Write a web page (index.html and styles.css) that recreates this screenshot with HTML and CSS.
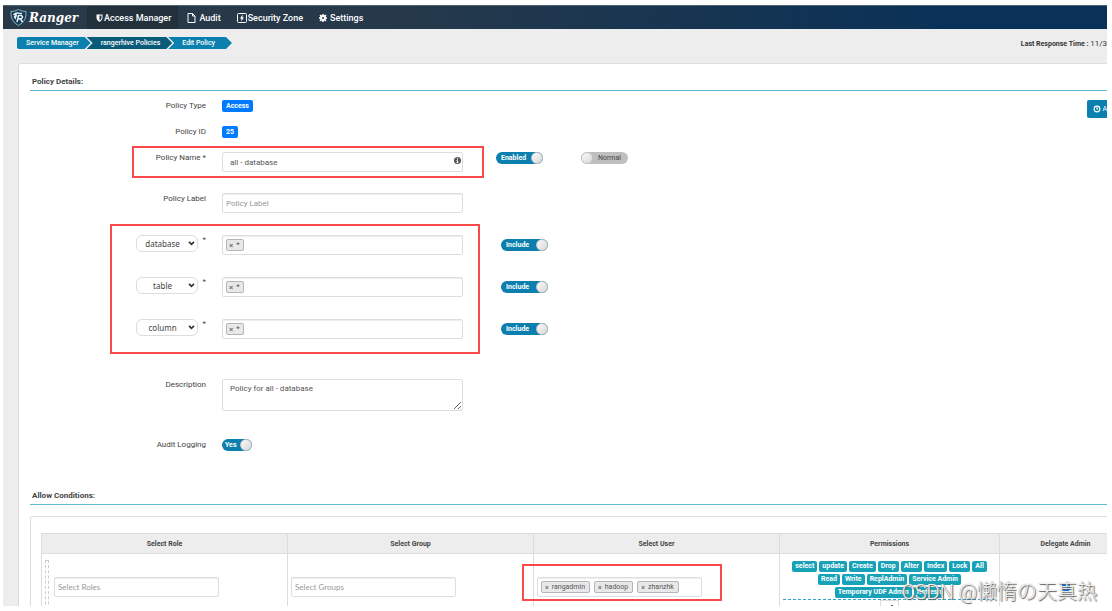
FILE: index.html
```html
<!DOCTYPE html>
<html lang="en">
<head>
<meta charset="utf-8">
<title>Ranger - Edit Policy</title>
<link rel="stylesheet" href="styles.css">
</head>
<body>
<div class="app">
  <header class="navbar">
    <a class="brand" href="#">
      <svg class="shield" viewBox="0 0 34 34" aria-hidden="true">
        <path d="M17 1 Q24 5 32 5 Q34 24 17 33 Q0 24 2 5 Q10 5 17 1Z" fill="#173d55" stroke="#7fb4cc" stroke-width="2"/>
        <path d="M7 12 Q11 7 17 8 L24 9 M8 16 L14 13 M12 10 L10 20 M14 26 L17 13 L23 13 Q27 16 23 19 L17 20 M21 20 L25 26" fill="none" stroke="#e8f2f7" stroke-width="3"/>
      </svg>
      <span>Ranger</span>
    </a>
    <nav class="menu">
      <a class="menu-item active" href="#">
        <svg class="ico ico-shield" viewBox="0 0 14 16" aria-hidden="true"><path d="M1 1H13V8Q13 13 7 16Q1 13 1 8Z" fill="#fff"/><path d="M7 3H11V8Q11 11 7 13Z" fill="#26323f"/></svg>
        <span>Access Manager</span>
      </a>
      <a class="menu-item" href="#">
        <svg class="ico" viewBox="0 0 18 20" aria-hidden="true"><path d="M2 1H11L16 6V19H2Z M11 1V6H16" fill="none" stroke="#fff" stroke-width="2"/></svg>
        <span>Audit</span>
      </a>
      <a class="menu-item zone" href="#">
        <svg class="ico ico-zone" viewBox="0 0 20 20" aria-hidden="true"><rect x="1" y="1" width="18" height="18" rx="2" fill="none" stroke="#fff" stroke-width="2"/><path d="M11 3L6 11H9L8 17L14 9H11Z" fill="#fff"/></svg>
        <span>Security Zone</span>
      </a>
      <a class="menu-item" href="#">
        <svg class="ico ico-gear" viewBox="0 0 16 16" aria-hidden="true"><circle cx="8" cy="8" r="4" fill="none" stroke="#fff" stroke-width="4"/><path d="M8 0V3M8 13V16M0 8H3M13 8H16M2 2L5 5M11 11L14 14M14 2L11 5M5 11L2 14" stroke="#fff" stroke-width="3"/></svg>
        <span>Settings</span>
      </a>
    </nav>
  </header>

  <div class="subbar">
    <nav class="crumbs">
      <a class="crumb" href="#">Service Manager</a>
      <a class="crumb dark" href="#">rangerhive Policies</a>
      <a class="crumb last" href="#">Edit Policy</a>
    </nav>
    <p class="response"><b>Last Response Time :</b> <span>11/3</span></p>
  </div>

  <main class="card">
    <h2 class="section-title">Policy Details:</h2>
    <div class="details">
      <form class="form">
        <div class="row">
          <span class="label">Policy Type</span>
          <div class="control"><span class="badge">Access</span></div>
        </div>
        <div class="row">
          <span class="label">Policy ID</span>
          <div class="control"><span class="badge">25</span></div>
        </div>
        <div class="row row-name">
          <label class="label" for="name">Policy Name *</label>
          <div class="control">
            <input class="box" id="name" type="text" value="all - database">
            <svg class="info" viewBox="0 0 14 14" aria-hidden="true"><circle cx="7" cy="7" r="7" fill="#555"/><path d="M7 2V5M5 7H7V11M5 11H9" stroke="#fff" stroke-width="2" fill="none"/></svg>
          </div>
          <div class="switches">
            <label class="switch"><input type="checkbox" checked><span>Enabled</span></label>
            <label class="switch off"><input type="checkbox"><span>Normal</span></label>
          </div>
          <div class="mark mark-name"></div>
        </div>
        <div class="row row-label">
          <label class="label" for="plabel">Policy Label</label>
          <div class="control"><input class="box tight" id="plabel" type="text" placeholder="Policy Label"></div>
        </div>
        <div class="resources">
          <div class="row">
            <div class="label res"><div class="pick"><select aria-label="Resource level 1"><option>database</option></select><svg viewBox="0 0 8 6" aria-hidden="true"><path d="M1 1L4 4L7 1" fill="none" stroke="#333" stroke-width="2"/></svg></div><span>*</span></div>
            <div class="control"><div class="box tags"><span class="tag"><button type="button" aria-label="Remove">×</button>*</span></div></div>
            <div class="switches res-switch"><label class="switch"><input type="checkbox" checked><span>Include</span></label></div>
          </div>
          <div class="row">
            <div class="label res"><div class="pick"><select aria-label="Resource level 2"><option>table</option></select><svg viewBox="0 0 8 6" aria-hidden="true"><path d="M1 1L4 4L7 1" fill="none" stroke="#333" stroke-width="2"/></svg></div><span>*</span></div>
            <div class="control"><div class="box tags"><span class="tag"><button type="button" aria-label="Remove">×</button>*</span></div></div>
            <div class="switches res-switch"><label class="switch"><input type="checkbox" checked><span>Include</span></label></div>
          </div>
          <div class="row">
            <div class="label res"><div class="pick"><select aria-label="Resource level 3"><option>column</option></select><svg viewBox="0 0 8 6" aria-hidden="true"><path d="M1 1L4 4L7 1" fill="none" stroke="#333" stroke-width="2"/></svg></div><span>*</span></div>
            <div class="control"><div class="box tags"><span class="tag"><button type="button" aria-label="Remove">×</button>*</span></div></div>
            <div class="switches res-switch"><label class="switch"><input type="checkbox" checked><span>Include</span></label></div>
          </div>
          <div class="mark mark-res"></div>
        </div>
        <div class="row row-desc">
          <label class="label" for="desc">Description</label>
          <div class="control"><textarea class="box area" id="desc">Policy for all - database</textarea></div>
        </div>
        <div class="row row-audit">
          <span class="label">Audit Logging</span>
          <div class="control"><label class="switch short"><input type="checkbox" checked><span>Yes</span></label></div>
        </div>
      </form>
      <button class="validity" type="button">
        <svg viewBox="0 0 14 14" aria-hidden="true"><circle cx="7" cy="7" r="5" fill="none" stroke="#fff" stroke-width="2"/><path d="M7 4V7H9" fill="none" stroke="#fff" stroke-width="2"/></svg>
        <span>A</span>
      </button>
    </div>

    <h2 class="section-title second">Allow Conditions:</h2>
    <div class="panel">
      <table class="conditions">
        <thead>
          <tr><th class="wide">Select Role</th><th class="wide">Select Group</th><th class="wide">Select User</th><th class="perm">Permissions</th><th>Delegate Admin</th></tr>
        </thead>
        <tbody>
          <tr>
            <td><div class="role"><i class="handle"></i><input class="box tight pick-input" type="text" placeholder="Select Roles" aria-label="Select Roles"></div></td>
            <td><input class="box tight pick-input" type="text" placeholder="Select Groups" aria-label="Select Groups"></td>
            <td>
              <div class="users">
                <div class="box tags pick-input">
                  <span class="tag"><button type="button" aria-label="Remove">×</button>rangadmin</span>
                  <span class="tag"><button type="button" aria-label="Remove">×</button>hadoop</span>
                  <span class="tag"><button type="button" aria-label="Remove">×</button>zhanzhk</span>
                </div>
                <div class="mark mark-users"></div>
              </div>
            </td>
            <td>
              <div class="perms">
                <span>select</span><span>update</span><span>Create</span><span>Drop</span><span>Alter</span><span>Index</span><span>Lock</span><span>All</span>
                <span>Read</span><span>Write</span><span>ReplAdmin</span><span>Service Admin</span>
                <span>Temporary UDF Admin</span><span>Refresh</span>
              </div>
              <button class="edit" type="button" aria-label="Edit permissions"><svg viewBox="0 0 12 12" aria-hidden="true"><path d="M1 11L2 8L9 1L11 3L4 10Z" fill="#333"/></svg></button>
            </td>
            <td><input class="delegate" type="checkbox" checked aria-label="Delegate Admin"></td>
          </tr>
        </tbody>
      </table>
    </div>
  </main>
  <div class="watermark">CSDN @懒惰の天真热</div>
</div>
</body>
</html>
```
FILE: styles.css
```css
* { box-sizing: border-box; }
body {
  margin: 0;
  padding: 5px 5px 5px 3px;
  background: #fff;
  color: #444;
  font: 8px/12px Roboto, "Noto Sans CJK SC", sans-serif;
}
input, select, textarea, button { font: inherit; color: inherit; }
a { color: inherit; text-decoration: none; }

.app {
  position: relative;
  height: calc(100vh - 10px);
  overflow: hidden;
  background: #ededed;
}

.navbar {
  display: flex;
  height: 24px;
  border-top: 1px solid #4d6470;
  background: linear-gradient(100deg, #293947 0%, #26394a 35%, #0a3157 85%, #0a3157 100%);
  color: #fff;
}
.brand {
  display: flex;
  align-items: center;
  gap: 2px;
  width: 84px;
  padding-left: 7px;
  font: italic bold 12px/22px "DejaVu Serif", serif;
}
.shield { width: 17px; height: 17px; }
.menu { display: flex; font-size: 9px; font-weight: 500; }
.menu-item {
  display: flex;
  align-items: center;
  gap: 3px;
  padding: 0 7px 0 9px;
}
.menu-item.active { background: #22303c; gap: 1px; }
.menu-item.zone { gap: 1px; }
.ico { width: 9px; height: 10px; }
.ico-shield { width: 7px; height: 8px; }
.ico-zone { width: 10px; }
.ico-gear { width: 8px; height: 8px; }

.subbar {
  display: flex;
  justify-content: space-between;
  align-items: center;
  height: 34px;
  padding: 0 0 6px 14px;
  font-size: 7px;
}
.crumbs { display: flex; color: #fff; font-weight: 500; }
.crumb {
  padding: 0 12px 0 14px;
  margin-right: -4px;
  background: #0b7fad;
  clip-path: polygon(0 0, calc(100% - 6px) 0, 100% 50%, calc(100% - 6px) 100%, 0 100%, 6px 50%);
}
.crumb:first-child {
  padding-left: 9px;
  border-radius: 2px;
  clip-path: polygon(0 0, calc(100% - 6px) 0, 100% 50%, calc(100% - 6px) 100%, 0 100%);
}
.crumb.dark { background: #0a5a7a; }
.crumb.last { padding-right: 17px; }
.response { margin: 0; padding-top: 2px; color: #333; }
.response b { font-weight: 700; }
.response span { font-size: 8px; }

.card {
  margin: 0 -62px 0 15px;
  min-height: 100%;
  padding: 12px 24px 12px 11px;
  border: 1px solid #ddd;
  border-radius: 3px;
  background: #fff;
}
.section-title {
  margin: 0;
  padding: 0 2px 2px;
  border-bottom: 1px solid #62b8d2;
  font-size: 8px;
  line-height: 12px;
  font-weight: 700;
  color: #444;
}
.second { margin-top: 39px; }
.details {
  display: flex;
  justify-content: space-between;
  align-items: flex-start;
  margin-right: 37px;
  padding-top: 9px;
}
.row { position: relative; display: flex; margin-bottom: 14px; }
.row-name { margin-bottom: 21px; }
.row-label { margin-bottom: 22px; }
.row-desc { margin-bottom: 28px; }
.row-audit { margin-bottom: 0; }
.resources { position: relative; margin-bottom: 40px; }
.resources .row { margin-bottom: 22px; }
.label { width: 176px; margin-right: 16px; text-align: right; }
.control { position: relative; display: flex; width: 241px; }
.badge {
  padding: 0 4px;
  border-radius: 2px;
  background: #007bff;
  color: #fff;
  font-size: 7px;
  font-weight: 700;
}
.box {
  display: block;
  width: 100%;
  height: 20px;
  padding: 0 7px;
  border: 1px solid #dadfe0;
  border-radius: 2px;
  background: #fff;
  color: #555;
}
.box.tight { padding: 0 3px; box-shadow: inset 0 1px 1px #eee; }
.box::placeholder { color: #999; }
.area { height: 32px; padding-top: 3px; resize: vertical; }
.info { position: absolute; right: 2px; top: 5px; width: 7px; height: 7px; }

.tags {
  display: flex;
  align-items: center;
  gap: 4px;
  padding: 0 3px;
  box-shadow: inset 0 1px 1px #eee;
}
.tag {
  display: flex;
  align-items: center;
  gap: 3px;
  height: 12px;
  padding: 0 3px 0 2px;
  border: 1px solid #b5b5b5;
  border-radius: 2px;
  background: #e8e8e8;
}
.tag button {
  padding: 1px 0 0;
  border: 0;
  background: none;
  font-weight: 700;
  color: #777;
}

.res { display: flex; justify-content: flex-end; gap: 5px; line-height: 10px; }
.pick { position: relative; height: 17px; }
.pick select {
  width: 62px;
  height: 17px;
  padding: 0 12px 0 4px;
  border: 1px solid #ddd;
  border-radius: 6px;
  background: #fff;
  appearance: none;
  text-align: center;
  font-family: "Noto Sans", sans-serif;
}
.pick svg { position: absolute; right: 3px; top: 6px; width: 7px; height: 5px; }

.switches { display: flex; gap: 38px; padding: 0 0 0 33px; }
.res-switch { padding: 4px 0 0 38px; }
.switch {
  position: relative;
  display: block;
  width: 47px;
  height: 12px;
  padding-left: 5px;
  border-radius: 6px;
  background: #0b7fad;
  color: #fff;
  font-size: 7px;
  font-weight: 700;
}
.switch input {
  position: absolute;
  right: 0;
  top: 0;
  width: 12px;
  height: 12px;
  margin: 0;
  border: 1px solid #c4c4c4;
  border-radius: 50%;
  background: linear-gradient(135deg, #fafafa, #d8d8d8);
  appearance: none;
}
.switch.off { padding-left: 17px; background: #bfbfbf; color: #444; font-weight: 400; }
.switch.off input { left: 0; right: auto; }
.switch.short { width: 30px; padding-left: 3px; }

.mark { position: absolute; border: 2px solid #fa4a4a; pointer-events: none; }
.mark-name { left: 102px; top: -6px; width: 352px; height: 32px; }
.mark-res { left: 80px; top: -11px; width: 370px; height: 130px; }
.mark-users { left: -15px; top: -13px; width: 200px; height: 37px; }

.validity {
  display: flex;
  align-items: center;
  gap: 1px;
  height: 18px;
  padding: 0 0 0 6px;
  border: 0;
  border-radius: 2px 0 0 2px;
  background: #0b7fad;
  color: #fff;
  font-size: 7px;
}
.validity svg { width: 8px; height: 8px; }

.panel { margin-top: 11px; padding: 16px 11px 16px 10px; border: 1px solid #ddd; border-radius: 2px; }
.conditions { width: 100%; border-collapse: collapse; table-layout: fixed; }
.conditions th {
  height: 20px;
  padding: 0;
  border: 1px solid #ddd;
  background: #ededed;
  font-size: 7px;
  font-weight: 700;
}
.conditions .wide { width: 246px; }
.conditions .perm { width: 220px; }
.conditions td { height: 90px; padding: 6px 3px; border: 1px solid #ddd; vertical-align: top; text-align: center; }
.role { display: flex; gap: 5px; }
.handle { width: 4px; height: 60px; border: 1px dashed #ccc; }
.pick-input { width: 165px; margin-top: 17px; font-family: Lato, sans-serif; }
.users { position: relative; }
.users .tags { font-family: Roboto, sans-serif; font-size: 7px; }
.users .tag { padding: 0 4px 0 3px; }
.perms {
  display: flex;
  flex-wrap: wrap;
  justify-content: center;
  gap: 2px;
  padding: 1px 8px;
  border-bottom: 1px dashed #35a3cf;
}
.perms span {
  padding: 0 3px;
  border-radius: 2px;
  background: #17a2b8;
  color: #fff;
  font-size: 7px;
  font-weight: 700;
  line-height: 11px;
}
.edit { width: 19px; height: 16px; padding: 2px; border: 1px solid #ddd; background: #fff; }
.edit svg { display: block; width: 8px; height: 8px; margin: auto; }
.delegate { width: 8px; height: 8px; margin: 23px 0 0; }

.watermark {
  position: absolute;
  right: 10px;
  bottom: 2px;
  font: 300 20px/24px Roboto, "Noto Sans CJK SC", sans-serif;
  color: #f4f4f4;
  text-shadow: 1px 1px 1px #555, 0 0 1px #888;
}
```
